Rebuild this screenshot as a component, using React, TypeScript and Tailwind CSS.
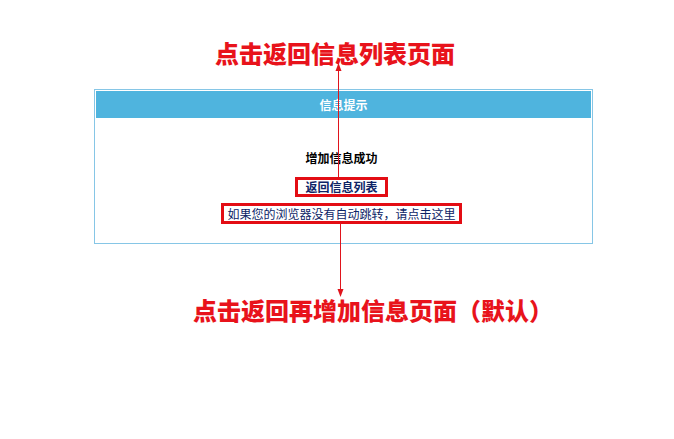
const cjk = { fontFamily: '"Noto Sans CJK SC", "Noto Sans", sans-serif' };

function Arrow({ x, from, to }: { x: number; from: number; to: number }) {
  const down = to > from;
  const tip = to;
  const base = down ? tip - 8 : tip + 8;
  return (
    <g>
      <line x1={x} y1={from} x2={x} y2={base} stroke="#e0141c" strokeWidth={1} />
      <polygon points={`${x - 3},${base} ${x + 3},${base} ${x},${tip}`} fill="#e0141c" />
    </g>
  );
}

export default function App() {
  return (
    <div className="relative w-[674px] h-[439px] bg-white overflow-hidden" style={cjk}>
      <h1 className="pt-[38px] ml-[215px] text-[24px] leading-[30px] font-black text-[#e8131b] tracking-[0px]">
        点击返回信息列表页面
      </h1>

      <div className="mt-[21px] ml-[94px] w-[499px] h-[155px] border border-[#86c6e6] p-px flex flex-col">
        <div className="h-[27px] bg-[#4fb4de] text-white text-[12px] font-bold flex items-center justify-center">
          信息提示
        </div>
        <div className="flex flex-col items-center pt-[33px] pr-[4px]">
          <p className="text-[12px] font-bold text-black leading-[14px]">增加信息成功</p>
          <a className="mt-[12px] border-[3px] border-[#e30d14] px-[7px] h-[20px] flex items-center text-[12px] font-bold text-[#0d2466] leading-[14px]">
            返回信息列表
          </a>
          <a className="mt-[6px] border-[3px] border-[#e30d14] px-[3px] h-[21px] flex items-center text-[12px] text-[#0d2466] leading-[14px]">
            如果您的浏览器没有自动跳转，请点击这里
          </a>
        </div>
      </div>

      <h2 className="mt-[51px] ml-[193px] text-[24px] leading-[30px] font-black text-[#e8131b]">
        点击返回再增加信息页面（默认）
      </h2>

      <svg className="absolute inset-0 pointer-events-none" width={674} height={439}>
        <Arrow x={338.5} from={177} to={63} />
        <Arrow x={340.5} from={223} to={297} />
      </svg>
    </div>
  );
}
